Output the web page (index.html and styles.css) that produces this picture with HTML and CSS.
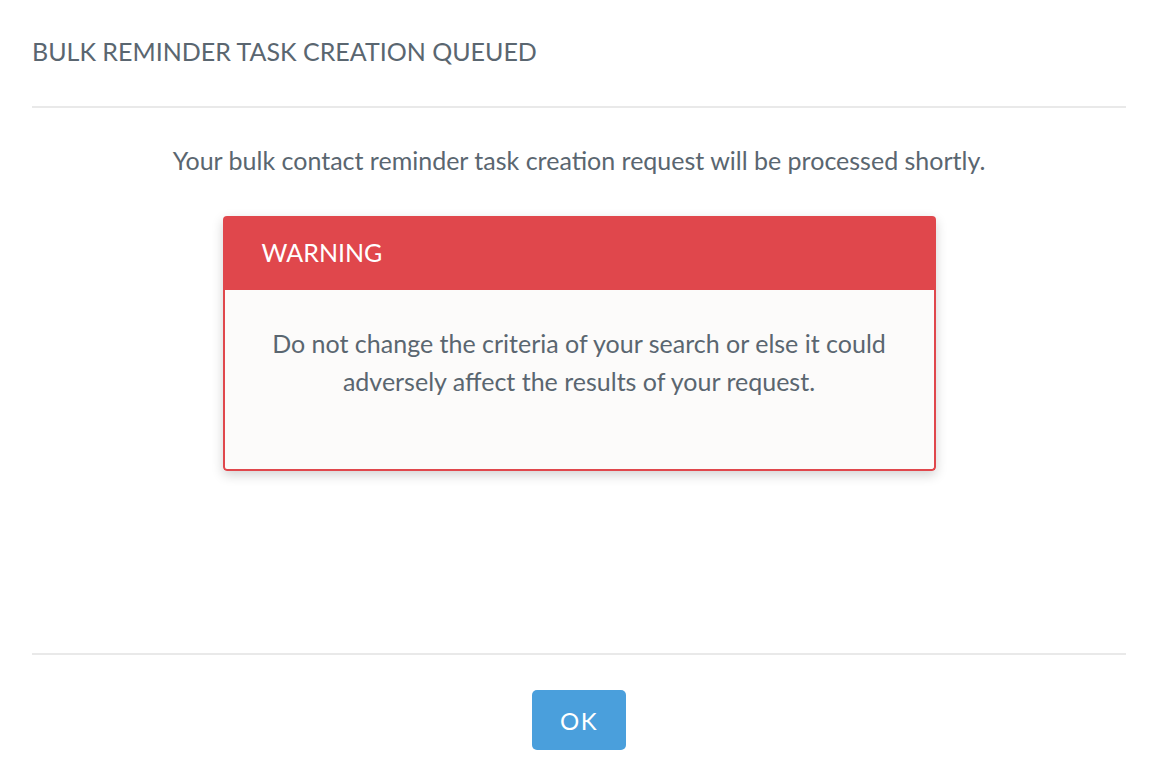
FILE: index.html
```html
<!DOCTYPE html>
<html>
<head>
<meta charset="utf-8">
<link rel="stylesheet" href="styles.css">
</head>
<body>
<div class="modal">
  <div class="modal-header">
    <h1 class="modal-title">BULK REMINDER TASK CREATION QUEUED</h1>
  </div>
  <div class="modal-body">
    <p class="lead">Your bulk contact reminder task creation request will be processed shortly.</p>
    <div class="alert">
      <div class="alert-head">WARNING</div>
      <div class="alert-body">
        <p>Do not change the criteria of your search or else it could<br>adversely affect the results of your request.</p>
      </div>
    </div>
  </div>
  <div class="modal-footer">
    <button class="btn-ok">OK</button>
  </div>
</div>
</body>
</html>
```

FILE: styles.css
```css
html, body {
  margin: 0;
  padding: 0;
  background: #ffffff;
}
body {
  font-family: Lato, "Open Sans", sans-serif;
  color: #5a6670;
}
.modal {
  padding: 0 24px 0 32px;
  display: flex;
  flex-direction: column;
  height: 778px;
  box-sizing: border-box;
}
.modal-header {
  height: 108px;
  border-bottom: 2px solid #e9e9e9;
  box-sizing: border-box;
  display: flex;
  align-items: flex-start;
}
.modal-title {
  margin: 35px 0 0 0;
  font-size: 25px;
  font-weight: 400;
  line-height: 32px;
  color: #5a6670;
}
.modal-body {
  height: 547px;
  box-sizing: border-box;
  border-bottom: 2px solid #e9e9e9;
  display: flex;
  flex-direction: column;
  align-items: center;
}
.lead {
  margin: 36px 0 0 0;
  font-size: 25px;
  line-height: 32px;
  text-align: center;
}
.alert {
  margin-top: 40px;
  width: 713px;
  border-radius: 4px;
  overflow: hidden;
  box-shadow: 0 4px 12px rgba(0,0,0,0.18);
}
.alert-head {
  background: #e0474c;
  color: #ffffff;
  height: 74px;
  line-height: 72px;
  padding-left: 39px;
  font-size: 25px;
}
.alert-body {
  background: #fcfbfa;
  border: 2px solid #e0474c;
  border-top: none;
  border-radius: 0 0 4px 4px;
  height: 181px;
  box-sizing: border-box;
  text-align: center;
}
.alert-body p {
  margin: 0;
  padding-top: 34px;
  font-size: 25px;
  line-height: 38px;
}
.modal-footer {
  display: flex;
  justify-content: center;
  padding-top: 35px;
}
.btn-ok {
  width: 94px;
  height: 60px;
  border: none;
  border-radius: 5px;
  background: #4a9fdc;
  color: #ffffff;
  font-family: Lato, "Open Sans", sans-serif;
  font-size: 24px;
  letter-spacing: 1.5px;
}
```
